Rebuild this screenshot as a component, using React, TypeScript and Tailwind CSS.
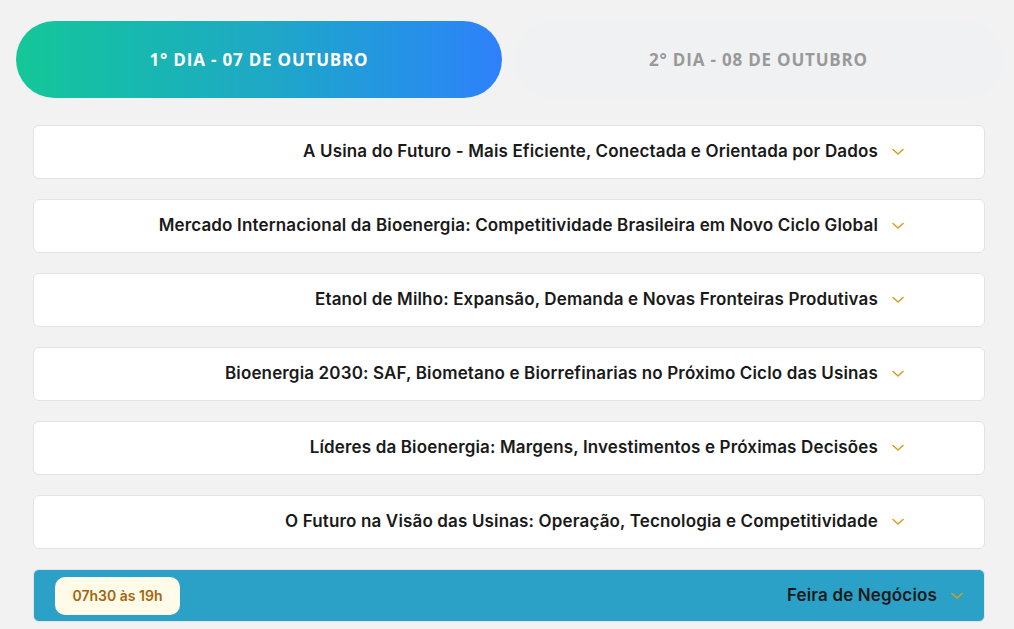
import React from "react";

const items = [
  "A Usina do Futuro - Mais Eficiente, Conectada e Orientada por Dados",
  "Mercado Internacional da Bioenergia: Competitividade Brasileira em Novo Ciclo Global",
  "Etanol de Milho: Expansão, Demanda e Novas Fronteiras Produtivas",
  "Bioenergia 2030: SAF, Biometano e Biorrefinarias no Próximo Ciclo das Usinas",
  "Líderes da Bioenergia: Margens, Investimentos e Próximas Decisões",
  "O Futuro na Visão das Usinas: Operação, Tecnologia e Competitividade",
];

function Chevron() {
  return (
    <svg width="12" height="8" viewBox="0 0 12 8" className="shrink-0">
      <path d="M1 1.5 L6 6 L11 1.5" fill="none" stroke="#d4a020" strokeWidth="1.6" strokeLinecap="round" strokeLinejoin="round" />
    </svg>
  );
}

export default function App() {
  return (
    <div className="min-h-[629px] w-full bg-[#f2f2f2] overflow-hidden" style={{ fontFamily: "Inter, 'Noto Sans', sans-serif" }}>
      <div className="flex gap-[11px] pl-4 pr-[10px] pt-[21px]">
        <div className="flex h-[77px] w-[486px] items-center justify-center rounded-full bg-gradient-to-r from-[#14c797] via-[#1fa9c4] to-[#2f80fb] text-[17px] font-bold tracking-[0.8px] text-white" style={{ fontFamily: "'Open Sans', sans-serif" }}>
          1° DIA - 07 DE OUTUBRO
        </div>
        <div className="flex h-[77px] flex-1 items-center justify-center rounded-full bg-[#f0f1f3] text-[17px] font-bold tracking-[0.8px] text-[#999999]" style={{ fontFamily: "'Open Sans', sans-serif" }}>
          2° DIA - 08 DE OUTUBRO
        </div>
      </div>
      <div className="flex flex-col gap-[20px] pl-[33px] pr-[29px] pt-[27px]">
        {items.map((t) => (
          <div key={t} className="flex h-[54px] items-center justify-end gap-[14px] rounded-[6px] border border-[#e3e3e3] bg-white pr-[80px]">
            <span className="text-[17px] font-semibold tracking-[0.15px] text-[#1a1a1a]">{t}</span>
            <Chevron />
          </div>
        ))}
        <div className="flex h-[53px] items-center rounded-[6px] border border-[#e3e3e3] bg-[#2ca1c8] pl-[21px] pr-[21px]">
          <div className="flex h-[38px] w-[125px] items-center justify-center rounded-[10px] bg-[#fefbe8] text-[14px] font-semibold text-[#a5650f]">
            07h30 às 19h
          </div>
          <div className="flex-1" />
          <span className="mr-[14px] text-[17px] font-semibold tracking-[0.15px] text-[#1a1a1a]">Feira de Negócios</span>
          <Chevron />
        </div>
      </div>
    </div>
  );
}
